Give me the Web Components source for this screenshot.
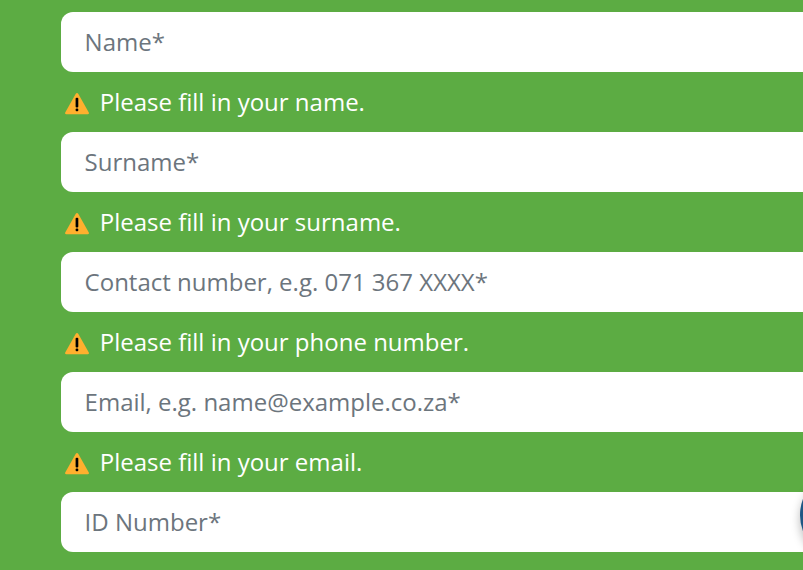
<!DOCTYPE html>
<html lang="en"><head><meta charset="utf-8"><title>Contact form</title>
<style>html,body{margin:0;height:100%;overflow:hidden;background:#5cac43}body{font-family:"Open Sans",sans-serif;font-size:24px}</style></head><body>
<contact-form></contact-form>
<script>
customElements.define('warning-icon', class extends HTMLElement{
 constructor(){super();this.attachShadow({mode:'open'}).innerHTML=`<style>:host{display:block;width:24px;height:22px}svg{display:block}</style>
 <svg width="24" height="22" viewBox="0 0 24 22"><path d="M10.6 .9Q12 -.8 13.4 .9L23.8 19.5Q24.3 21.2 22.7 21.2H1.3Q-.3 21.2 .2 19.5Z" fill="#ffb02e"/><rect x="10.6" y="4.8" width="2.7" height="9.6" rx="1" fill="#000"/><rect x="10.6" y="15.5" width="2.7" height="2.8" rx="1" fill="#000"/></svg>`}
});
customElements.define('form-field', class extends HTMLElement{
 constructor(){super();this.attachShadow({mode:'open'}).innerHTML=`<style>:host{display:flex;align-items:center;box-sizing:border-box;height:60px;padding:0 23.6px 2px;border-radius:12px 0 0 12px;background:#fff;color:#6c757d;white-space:nowrap}</style><span><slot></slot></span>`}
});
customElements.define('field-error', class extends HTMLElement{
 constructor(){super();this.attachShadow({mode:'open'}).innerHTML=`<style>:host{display:flex;align-items:center;box-sizing:border-box;gap:10.7px;height:60px;padding:0 0 2px 4px;color:#fff;white-space:nowrap}warning-icon{margin-top:6px}</style><warning-icon></warning-icon><span><slot></slot></span>`}
});
customElements.define('chat-bubble', class extends HTMLElement{
 constructor(){super();this.attachShadow({mode:'open'}).innerHTML=`<style>:host{display:block;position:absolute;right:0;top:470px;width:20px;height:100px;overflow:hidden}div{position:absolute;left:17px;top:0;width:90px;height:90px;border-radius:50%;background:#1d5785;box-shadow:0 5px 10px #0004}</style><div></div>`}
});
customElements.define('contact-form', class extends HTMLElement{
 constructor(){super();this.attachShadow({mode:'open'}).innerHTML=`<style>:host{display:flex;flex-direction:column;box-sizing:border-box;padding:12px 0 18px 61px}</style>
<form-field>Name*</form-field><field-error>Please fill in your name.</field-error>
<form-field>Surname*</form-field><field-error>Please fill in your surname.</field-error>
<form-field>Contact number, e.g. 071 367 XXXX*</form-field><field-error>Please fill in your phone number.</field-error>
<form-field>Email, e.g. name@example.co.za*</form-field><field-error>Please fill in your email.</field-error>
<form-field>ID Number*</form-field><chat-bubble></chat-bubble>`}
});
</script></body></html>
